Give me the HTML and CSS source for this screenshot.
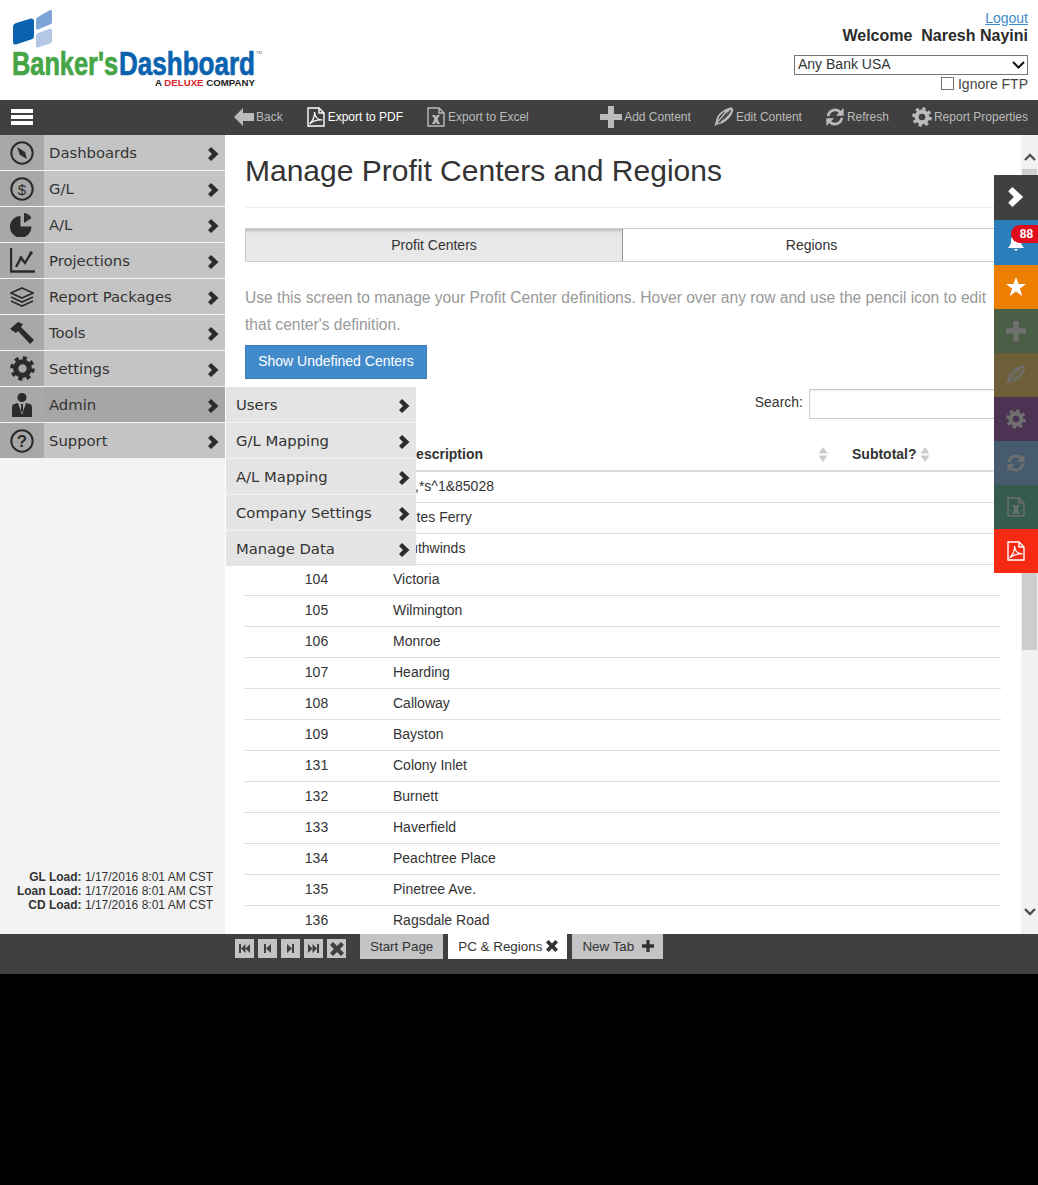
FILE: index.html
```html
<!DOCTYPE html>
<html lang="en">
<head>
  <meta charset="UTF-8">
  <title>Manage Profit Centers and Regions</title>
  <link rel="stylesheet" href="styles.css">
</head>
<body>

  <svg class="sprites" width="0" height="0">
    <symbol id="i-chevron" viewBox="0 0 11 14"><path d="M0 3 L3 0 L10.5 7 L3 14 L0 11 L4 7 Z" fill="currentColor"/></symbol>
    <symbol id="i-gear" viewBox="0 0 24 24">
      <circle cx="12" cy="12" r="6.5" fill="none" stroke="currentColor" stroke-width="5"/>
      <circle cx="12" cy="12" r="10" fill="none" stroke="currentColor" stroke-width="3.6" stroke-dasharray="3.9 3.95"/>
    </symbol>
    <symbol id="i-plus" viewBox="0 0 22 22"><path d="M8 0 H14 V8 H22 V14 H14 V22 H8 V14 H0 V8 H8 Z" fill="currentColor"/></symbol>
    <symbol id="i-pen" viewBox="0 0 22 22">
      <path fill-rule="evenodd" fill="currentColor" d="M0.5 21.500 L3 12 C5 7 11 2.500 17 0.800 C20 0 21.500 1.500 21 4 C20 9 15 15 9.500 17.500 L3 19.500 Z M3.500 18 L7 16.800 L15.500 6.500 L14.500 5.500 Z M9.500 14.600 C13 12.500 17 8 18.800 3.800 L17.500 3 Z M4.600 14.500 L12.500 5 C9 6.500 6 9.500 5 12.500 Z"/>
    </symbol>
    <symbol id="i-refresh" viewBox="0 0 22 22">
      <path d="M3.500 10 A7.700 7.700 0 0 1 17 6 M18.500 12 A7.700 7.700 0 0 1 5 16" fill="none" stroke="currentColor" stroke-width="3"/>
      <path d="M20.500 1 V9.500 H12 Z M1.500 21 V12.500 H10 Z" fill="currentColor"/>
    </symbol>
    <symbol id="i-pdf" viewBox="0 0 18 20">
      <path d="M1 1 H12 L17 6 V19 H1 Z M12 1 V6 H17" fill="none" stroke="currentColor" stroke-width="1.4"/>
      <path d="M2.5 17 C5 15 8 10 7.5 5 C8 10 11 13 15.5 13 C11 12.5 6 14 2.5 17 Z" fill="none" stroke="currentColor" stroke-width="1.2"/>
    </symbol>
    <symbol id="i-excel" viewBox="0 0 18 20">
      <path d="M1 1 H12 L17 6 V19 H1 Z M12 1 V6 H17" fill="none" stroke="currentColor" stroke-width="1.4"/>
      <path d="M5 8 H8 L9 10 L10 8 H13 L10.5 12 L13 17 H10 L9 14.5 L8 17 H5 L7.5 12 Z" fill="currentColor"/>
    </symbol>
    <symbol id="i-sort" viewBox="0 0 10 15"><path d="M5 0 L9.5 6.5 H0.5 Z M5 15 L0.5 8.5 H9.5 Z" fill="currentColor"/></symbol>
    <symbol id="i-x" viewBox="0 0 14 14"><path d="M3 0 L7 4 L11 0 L14 3 L10 7 L14 11 L11 14 L7 10 L3 14 L0 11 L4 7 L0 3 Z" fill="currentColor"/></symbol>
  </svg>

  <div class="app">

    <header class="top">
      <svg class="logo" width="262" height="90" viewBox="0 0 262 90">
        <path d="M13 27 Q13 24 16 23 L31 18.500 Q34 18 34 21 V36 Q34 39 31 39.500 L16 44.500 Q13 45 13 42 Z" fill="#0a63ae"/>
        <path d="M36 20 Q36 18 38 17 L50 10 Q52 9.500 52 12 V22 Q52 24 50 24.500 L38 29.500 Q36 30 36 28 Z" fill="#7ea3d6"/>
        <path d="M36 36 Q36 34 38 33 L50 28.500 Q52 28 52 30 V41 Q52 43 50 43.500 L38 47.500 Q36 48 36 46 Z" fill="#b4c8e6"/>
        <text class="logo-name logo-green" x="12" y="75" textLength="106" lengthAdjust="spacingAndGlyphs">Banker's</text>
        <text class="logo-name logo-blue" x="119" y="75" textLength="136" lengthAdjust="spacingAndGlyphs">Dashboard</text>
        <text class="logo-tm" x="256" y="54">TM</text>
        <text class="logo-sub" x="155" y="86" textLength="100" lengthAdjust="spacingAndGlyphs">A <tspan class="logo-deluxe">DELUXE</tspan> COMPANY</text>
      </svg>
      <div class="user">
        <a class="logout" href="#">Logout</a>
        <div class="welcome">Welcome&nbsp; Naresh Nayini</div>
        <div class="bank-wrap">
          <select class="bank"><option>Any Bank USA</option></select>
          <svg class="bank-arrow" width="13" height="8" viewBox="0 0 13 8"><path d="M1 1 L6.500 6.500 L12 1" fill="none" stroke="currentColor" stroke-width="2"/></svg>
        </div>
        <label class="ftp"><span class="checkbox"></span>Ignore FTP</label>
      </div>
    </header>

    <nav class="toolbar">
      <button class="menu-btn" aria-label="Menu"><span></span><span></span><span></span></button>
      <a class="tool" href="#">
        <svg width="20" height="20" viewBox="0 0 20 20"><path d="M0 10 L9 1 V6 H20 V14 H9 V19 Z" fill="currentColor"/></svg>Back
      </a>
      <a class="tool tool-on tool-doc" href="#"><svg width="18" height="20"><use href="#i-pdf"/></svg>Export to PDF</a>
      <a class="tool tool-doc" href="#"><svg width="18" height="20"><use href="#i-excel"/></svg>Export to Excel</a>
      <a class="tool tool-push" href="#"><svg width="22" height="22"><use href="#i-plus"/></svg>Add Content</a>
      <a class="tool" href="#"><svg width="20" height="20"><use href="#i-pen"/></svg>Edit Content</a>
      <a class="tool" href="#"><svg width="20" height="20"><use href="#i-refresh"/></svg>Refresh</a>
      <a class="tool" href="#"><svg width="20" height="20"><use href="#i-gear"/></svg>Report Properties</a>
    </nav>

    <div class="middle">

      <aside class="sidebar">
        <ul class="menu">
          <li class="menu-item">
            <span class="menu-icon"><svg width="24" height="24" viewBox="0 0 24 24"><circle cx="12" cy="12" r="10.700" fill="none" stroke="currentColor" stroke-width="2"/><path d="M7 6 L15 11 L17 18 L10 14 Z" fill="currentColor"/></svg></span>
            <span class="menu-label">Dashboards</span>
            <svg class="chev" width="11" height="14"><use href="#i-chevron"/></svg>
          </li>
          <li class="menu-item">
            <span class="menu-icon"><svg width="24" height="24" viewBox="0 0 24 24"><circle cx="12" cy="12" r="10.700" fill="none" stroke="currentColor" stroke-width="2"/><text class="icon-glyph icon-glyph-thin" x="12" y="17.500" font-size="15">$</text></svg></span>
            <span class="menu-label">G/L</span>
            <svg class="chev" width="11" height="14"><use href="#i-chevron"/></svg>
          </li>
          <li class="menu-item">
            <span class="menu-icon"><svg width="24" height="24" viewBox="0 0 24 24"><path d="M10.500 3 V13.500 H21.500 A10.800 10.800 0 1 1 10.500 3 Z M14 0 A10 10 0 0 1 21.500 5 L14 10 Z" fill="currentColor"/></svg></span>
            <span class="menu-label">A/L</span>
            <svg class="chev" width="11" height="14"><use href="#i-chevron"/></svg>
          </li>
          <li class="menu-item">
            <span class="menu-icon"><svg width="25" height="25" viewBox="0 0 25 25"><path d="M1 0 V23.500 H25" fill="none" stroke="currentColor" stroke-width="2.400"/><path d="M6 19 L11 10 L15 15 L21 5" fill="none" stroke="currentColor" stroke-width="2.400"/><circle cx="11" cy="10" r="1.800" fill="currentColor"/><circle cx="21" cy="5" r="1.800" fill="currentColor"/></svg></span>
            <span class="menu-label">Projections</span>
            <svg class="chev" width="11" height="14"><use href="#i-chevron"/></svg>
          </li>
          <li class="menu-item">
            <span class="menu-icon"><svg width="24" height="20" viewBox="0 0 24 20"><path d="M12 1 L23 6 L12 11 L1 6 Z M1 10 L12 15 L23 10 M1 14 L12 19 L23 14" fill="none" stroke="currentColor" stroke-width="1.700"/></svg></span>
            <span class="menu-label">Report Packages</span>
            <svg class="chev" width="11" height="14"><use href="#i-chevron"/></svg>
          </li>
          <li class="menu-item">
            <span class="menu-icon"><svg width="24" height="22" viewBox="0 0 24 22"><path d="M0 7 L8 0 L13 2 L11 5 L24 18 L20 22 L8 9 L6 11 Z" fill="currentColor"/></svg></span>
            <span class="menu-label">Tools</span>
            <svg class="chev" width="11" height="14"><use href="#i-chevron"/></svg>
          </li>
          <li class="menu-item">
            <span class="menu-icon"><svg width="25" height="25"><use href="#i-gear"/></svg></span>
            <span class="menu-label">Settings</span>
            <svg class="chev" width="11" height="14"><use href="#i-chevron"/></svg>
          </li>
          <li class="menu-item menu-item-on">
            <span class="menu-icon"><svg width="20" height="24" viewBox="0 0 20 24"><circle cx="10" cy="4.500" r="4.500" fill="currentColor"/><path d="M0 24 V14 Q0 11 4 10.500 L6 10 L10 22 L14 10 L16 10.500 Q20 11 20 14 V24 Z M8.800 11 H11.200 L10.800 13 L11.300 17 L10 20 L8.700 17 L9.200 13 Z" fill="currentColor"/></svg></span>
            <span class="menu-label">Admin</span>
            <svg class="chev" width="11" height="14"><use href="#i-chevron"/></svg>
          </li>
          <li class="menu-item">
            <span class="menu-icon"><svg width="24" height="24" viewBox="0 0 24 24"><circle cx="12" cy="12" r="10.700" fill="none" stroke="currentColor" stroke-width="2"/><text class="icon-glyph" x="12" y="18" font-size="17">?</text></svg></span>
            <span class="menu-label">Support</span>
            <svg class="chev" width="11" height="14"><use href="#i-chevron"/></svg>
          </li>
        </ul>

        <div class="loads">
          <div><b>GL Load:</b> 1/17/2016 8:01 AM CST</div>
          <div><b>Loan Load:</b> 1/17/2016 8:01 AM CST</div>
          <div><b>CD Load:</b> 1/17/2016 8:01 AM CST</div>
        </div>
      </aside>

      <ul class="submenu">
        <li class="sub-item"><span>Users</span><svg class="chev" width="11" height="14"><use href="#i-chevron"/></svg></li>
        <li class="sub-item"><span>G/L Mapping</span><svg class="chev" width="11" height="14"><use href="#i-chevron"/></svg></li>
        <li class="sub-item"><span>A/L Mapping</span><svg class="chev" width="11" height="14"><use href="#i-chevron"/></svg></li>
        <li class="sub-item"><span>Company Settings</span><svg class="chev" width="11" height="14"><use href="#i-chevron"/></svg></li>
        <li class="sub-item"><span>Manage Data</span><svg class="chev" width="11" height="14"><use href="#i-chevron"/></svg></li>
      </ul>

      <main class="content">
        <h1 class="title">Manage Profit Centers and Regions</h1>

        <div class="tabs">
          <a class="tab tab-on" href="#">Profit Centers</a>
          <a class="tab" href="#">Regions</a>
        </div>

        <p class="intro">Use this screen to manage your Profit Center definitions. Hover over any row and use the pencil icon to edit that center's definition.</p>

        <button class="btn-blue">Show Undefined Centers</button>

        <div class="search">
          <label for="search">Search:</label>
          <input type="text" id="search">
        </div>

        <table class="grid">
          <thead>
            <tr>
              <th class="col-id">Center</th>
              <th class="col-desc">Description<svg class="sort sort-end" width="10" height="15"><use href="#i-sort"/></svg></th>
              <th class="col-sub">Subtotal?<svg class="sort" width="10" height="15"><use href="#i-sort"/></svg></th>
            </tr>
          </thead>
          <tbody>
            <tr><td class="col-id">101</td><td>@$,*s^1&amp;85028</td><td></td></tr>
            <tr><td class="col-id">102</td><td>Waites Ferry</td><td></td></tr>
            <tr><td class="col-id">103</td><td>Southwinds</td><td></td></tr>
            <tr><td class="col-id">104</td><td>Victoria</td><td></td></tr>
            <tr><td class="col-id">105</td><td>Wilmington</td><td></td></tr>
            <tr><td class="col-id">106</td><td>Monroe</td><td></td></tr>
            <tr><td class="col-id">107</td><td>Hearding</td><td></td></tr>
            <tr><td class="col-id">108</td><td>Calloway</td><td></td></tr>
            <tr><td class="col-id">109</td><td>Bayston</td><td></td></tr>
            <tr><td class="col-id">131</td><td>Colony Inlet</td><td></td></tr>
            <tr><td class="col-id">132</td><td>Burnett</td><td></td></tr>
            <tr><td class="col-id">133</td><td>Haverfield</td><td></td></tr>
            <tr><td class="col-id">134</td><td>Peachtree Place</td><td></td></tr>
            <tr><td class="col-id">135</td><td>Pinetree Ave.</td><td></td></tr>
            <tr><td class="col-id">136</td><td>Ragsdale Road</td><td></td></tr>
          </tbody>
        </table>
      </main>

      <div class="scrollbar">
        <span class="scroll-arrow"><svg width="12" height="8" viewBox="0 0 12 8"><path d="M1 7 L6 2 L11 7" fill="none" stroke="currentColor" stroke-width="2.400"/></svg></span>
        <span class="scroll-thumb"></span>
        <span class="scroll-arrow scroll-arrow-down"><svg width="12" height="8" viewBox="0 0 12 8"><path d="M1 1 L6 6 L11 1" fill="none" stroke="currentColor" stroke-width="2.400"/></svg></span>
      </div>

      <div class="quick">
        <a class="quick-btn q-dark" href="#"><svg width="16" height="20" viewBox="0 0 11 14"><use href="#i-chevron"/></svg></a>
        <a class="quick-btn q-blue" href="#">
          <svg width="18" height="20" viewBox="0 0 18 20"><path d="M9 1 C13 1 14 5 14 9 C14 12 16 13 17 15 H1 C2 13 4 12 4 9 C4 5 5 1 9 1 Z M7 16 H11 L9 18 Z" fill="currentColor"/></svg>
          <span class="badge">88</span>
        </a>
        <a class="quick-btn q-orange" href="#"><svg width="20" height="20" viewBox="0 0 20 20"><path d="M10 0 L12.500 7 H20 L14 11.500 L16.200 19 L10 14.500 L3.800 19 L6 11.500 L0 7 H7.500 Z" fill="currentColor"/></svg></a>
        <a class="quick-btn q-green q-dim" href="#"><svg width="20" height="20"><use href="#i-plus"/></svg></a>
        <a class="quick-btn q-olive q-dim" href="#"><svg width="20" height="20"><use href="#i-pen"/></svg></a>
        <a class="quick-btn q-purple q-dim" href="#"><svg width="20" height="20"><use href="#i-gear"/></svg></a>
        <a class="quick-btn q-slate q-dim" href="#"><svg width="20" height="20"><use href="#i-refresh"/></svg></a>
        <a class="quick-btn q-teal q-dim" href="#"><svg width="18" height="20"><use href="#i-excel"/></svg></a>
        <a class="quick-btn q-red" href="#"><svg width="18" height="20"><use href="#i-pdf"/></svg></a>
      </div>
    </div>

    <footer class="bottom">
      <div class="pager">
        <button class="page-btn" aria-label="First"><svg width="11" height="9" viewBox="0 0 11 9"><path d="M0 0 H2 V9 H0 Z M6.500 0 V9 L2 4.500 Z M11 0 V9 L6.500 4.500 Z" fill="currentColor"/></svg></button>
        <button class="page-btn" aria-label="Previous"><svg width="7" height="9" viewBox="0 0 7 9"><path d="M0 0 H2 V9 H0 Z M7 0 V9 L2 4.500 Z" fill="currentColor"/></svg></button>
        <button class="page-btn" aria-label="Next"><svg width="7" height="9" viewBox="0 0 7 9"><path d="M7 0 H5 V9 H7 Z M0 0 V9 L5 4.500 Z" fill="currentColor"/></svg></button>
        <button class="page-btn" aria-label="Last"><svg width="11" height="9" viewBox="0 0 11 9"><path d="M11 0 H9 V9 H11 Z M4.500 0 V9 L9 4.500 Z M0 0 V9 L4.500 4.500 Z" fill="currentColor"/></svg></button>
        <button class="page-btn" aria-label="Close"><svg width="14" height="14"><use href="#i-x"/></svg></button>
      </div>
      <a class="page-tab" href="#">Start Page</a>
      <a class="page-tab page-tab-on" href="#">PC &amp; Regions<svg width="12" height="12"><use href="#i-x"/></svg></a>
      <a class="page-tab page-tab-new" href="#">New Tab<svg width="12" height="12" viewBox="0 0 22 22"><use href="#i-plus"/></svg></a>
    </footer>

  </div>

</body>
</html>
```

FILE: styles.css
```css
* {
  box-sizing: border-box;
}

html,
body {
  margin: 0;
  height: 1185px;
  background-color: #000;
}

body {
  font-family: "Liberation Sans", Arial, sans-serif;
  font-size: 14px;
  color: #333;
  overflow: hidden;
}

a {
  text-decoration: none;
  color: inherit;
}

ul {
  margin: 0;
  padding: 0;
  list-style: none;
}

svg {
  display: block;
  flex: none;
}

.sprites {
  position: absolute;
}

.app {
  display: flex;
  flex-direction: column;
  height: 974px;
}

/* header */
.top {
  display: flex;
  justify-content: space-between;
  height: 100px;
  background: white;
  padding-right: 10px;
}

.logo-name {
  font-family: "Liberation Sans", Arial, sans-serif;
  font-size: 33px;
  font-weight: bold;
  stroke-width: 0.7px;
}

.logo-green {
  fill: #45a545;
  stroke: #45a545;
}

.logo-blue {
  fill: #0a63ae;
  stroke: #0a63ae;
}

.logo-tm {
  font-size: 4px;
  fill: #666;
}

.logo-sub {
  font-size: 8.500px;
  font-weight: bold;
  fill: #222;
}

.logo-deluxe {
  fill: #d9262e;
  font-weight: 900;
}

.user {
  display: flex;
  flex-direction: column;
  align-items: flex-end;
  padding-top: 10px;
}

.logout {
  color: #428bca;
  text-decoration: underline;
  line-height: 16px;
}

.welcome {
  font-size: 16px;
  font-weight: bold;
  line-height: 19px;
  color: #2b2b2b;
  margin-bottom: 10px;
}

.bank-wrap {
  position: relative;
}

.bank {
  display: block;
  width: 234px;
  height: 20px;
  font-family: inherit;
  font-size: 14px;
  line-height: 16px;
  color: #333;
  background: white;
  border: 1px solid #767676;
  border-radius: 0;
  padding: 0 0 2px 3px;
  appearance: none;
}

.bank-arrow {
  position: absolute;
  right: 3px;
  top: 6px;
  color: #111;
}

.ftp {
  display: flex;
  align-items: center;
  gap: 4px;
  color: #444;
  line-height: 20px;
  margin-top: -1px;
}

.checkbox {
  width: 13px;
  height: 13px;
  border: 1px solid #767676;
  margin-top: -1px;
}

/* toolbar */
.toolbar {
  display: flex;
  align-items: center;
  gap: 23px;
  height: 35px;
  background-color: #404040;
  padding: 0 10px 1px 0;
}

.menu-btn {
  display: flex;
  flex-direction: column;
  gap: 2px;
  width: 22px;
  padding: 0;
  margin: 0 178px 0 11px;
  background: none;
  border: none;
}

.menu-btn span {
  height: 4px;
  background: white;
}

.tool {
  display: flex;
  align-items: center;
  gap: 2px;
  font-size: 12px;
  color: #bbb;
}

.tool-on {
  color: white;
}

.tool-doc {
  gap: 3px;
  margin-left: 1px;
}

.tool-push {
  margin-left: auto;
}

/* middle */
.middle {
  position: relative;
  display: flex;
  flex: 1;
  min-height: 0;
  overflow: hidden;
  background: white;
}

.sidebar {
  display: flex;
  flex-direction: column;
  flex: none;
  width: 225px;
  background-color: #f3f3f3;
}

.menu-item {
  display: flex;
  align-items: center;
  height: 35px;
  margin-bottom: 1px;
  background-color: #c4c4c4;
}

.menu-item-on {
  background-color: #a6a6a6;
}

.menu-icon {
  display: flex;
  align-items: center;
  justify-content: center;
  width: 44px;
  height: 100%;
  background-color: #a8a8a8;
  color: #2b2b2b;
}

.icon-glyph {
  font-family: "Liberation Sans", Arial, sans-serif;
  font-weight: bold;
  text-anchor: middle;
  fill: currentColor;
}

.icon-glyph-thin {
  font-weight: normal;
}

.menu-label {
  flex: 1;
  padding-left: 5px;
  font-family: "DejaVu Sans", Verdana, sans-serif;
  font-size: 14.800px;
  color: #333;
}

.chev {
  color: #2b2b2b;
  margin: 2px 6px 0 0;
}

.loads {
  margin-top: auto;
  padding: 0 12px 22px 0;
  text-align: right;
  font-size: 12px;
  line-height: 14px;
  color: #333;
}

.submenu {
  position: absolute;
  left: 226px;
  top: 252px;
  width: 190px;
  background-color: #f1f1f1;
  z-index: 2;
}

.sub-item {
  display: flex;
  align-items: center;
  justify-content: space-between;
  height: 35px;
  margin-bottom: 1px;
  padding-left: 10px;
  background-color: #e4e4e4;
  font-family: "DejaVu Sans", Verdana, sans-serif;
  font-size: 14.800px;
}

.sub-item:last-child {
  margin-bottom: 0;
}

/* content */
.content {
  flex: 1;
  min-width: 0;
  padding: 0 20px;
  overflow: hidden;
}

.title {
  margin: 0 0 20px;
  padding: 18px 0 18px;
  font-size: 30px;
  font-weight: normal;
  line-height: 36px;
  color: #333;
  border-bottom: 1px solid #eee;
}

.tabs {
  display: flex;
  height: 34px;
  border: 1px solid #ccc;
}

.tab {
  flex: 1;
  line-height: 32px;
  text-align: center;
}

.tab-on {
  flex: none;
  width: 377px;
  background-color: #e8e8e8;
  border-right: 1px solid #999;
  box-shadow: inset 0 4px 3px -2px #bbb;
}

.intro {
  margin: 22px 0 7px;
  font-size: 15.600px;
  line-height: 27px;
  color: #999;
}

.btn-blue {
  display: block;
  width: 182px;
  height: 34px;
  padding: 0 0 2px;
  font-family: inherit;
  font-size: 14px;
  color: white;
  background-color: #428bca;
  border: 1px solid #357ebd;
}

.search {
  display: flex;
  justify-content: flex-end;
  gap: 6px;
  margin: 10px 0 19px;
}

.search label {
  margin-top: 5px;
}

.search input {
  width: 192px;
  height: 30px;
  border: 1px solid #ccc;
  box-shadow: inset 0 1px 1px rgba(0,0,0,0.08);
}

.grid {
  width: 100%;
  table-layout: fixed;
  border-collapse: collapse;
}

.grid th {
  height: 33px;
  padding: 0 5px;
  text-align: left;
  border-bottom: 2px solid #ddd;
}

.grid td {
  height: 31px;
  padding: 0 5px 2px;
  border-bottom: 1px solid #ddd;
}

.grid .col-id {
  width: 143px;
  text-align: center;
  padding-left: 0;
  padding-right: 0;
}

.grid .col-desc {
  padding-left: 18px;
}

.grid .col-sub {
  width: 154px;
}

.sort {
  display: inline-block;
  color: #ccc;
  margin-left: 3px;
  vertical-align: -3px;
}

.sort-end {
  float: right;
  margin: 1px 14px 0 0;
}

/* scrollbar */
.scrollbar {
  display: flex;
  flex-direction: column;
  flex: none;
  width: 17px;
  background-color: #f1f1f1;
}

.scroll-arrow {
  display: flex;
  align-items: center;
  justify-content: center;
  height: 34px;
  padding-top: 10px;
  color: #505050;
}

.scroll-arrow-down {
  margin-top: auto;
  padding-top: 0;
  padding-bottom: 10px;
}

.scroll-thumb {
  height: 481px;
  margin: 0 1px;
  background-color: #cdcdcd;
}

/* coloured strip on the right */
.quick {
  position: absolute;
  right: 0;
  top: 40px;
  width: 44px;
  z-index: 3;
}

.quick-btn {
  position: relative;
  display: flex;
  align-items: center;
  justify-content: center;
  height: 44px;
  color: white;
}

.q-dim {
  color: #6f6f6f;
}

.q-dark { height: 45px; padding-bottom: 2px; background-color: #404040; }
.q-blue { height: 45px; background-color: #2a7fba; }
.q-orange { background-color: #ec7f00; }
.q-green { background-color: #4a5e45; }
.q-olive { background-color: #6d6039; }
.q-purple { background-color: #4c3353; }
.q-slate { background-color: #465c6e; }
.q-teal { background-color: #355b50; }
.q-red { background-color: #f62a12; }

.badge {
  position: absolute;
  right: 0;
  top: 5px;
  width: 27px;
  height: 18px;
  padding-left: 4px;
  font-size: 12px;
  font-weight: bold;
  line-height: 18px;
  text-align: center;
  color: white;
  background-color: #e00b1c;
  border-radius: 9px 0 0 9px;
}

/* bottom tabs */
.bottom {
  display: flex;
  align-items: flex-start;
  gap: 5px;
  height: 40px;
  padding-left: 235px;
  background-color: #404040;
}

.pager {
  display: flex;
  gap: 4px;
  margin: 5px 9px 0 0;
}

.page-btn {
  display: flex;
  align-items: center;
  justify-content: center;
  width: 19px;
  height: 19px;
  padding: 0;
  color: #404040;
  background-color: #c4c4c4;
  border: none;
}

.page-tab {
  display: flex;
  align-items: center;
  gap: 4px;
  height: 25px;
  padding: 0 10px 1px;
  font-size: 13.400px;
  color: #333;
  background-color: #c4c4c4;
}

.page-tab-on {
  padding-right: 9px;
  background-color: white;
}

.page-tab-new {
  gap: 8px;
  padding-right: 9px;
}
```
